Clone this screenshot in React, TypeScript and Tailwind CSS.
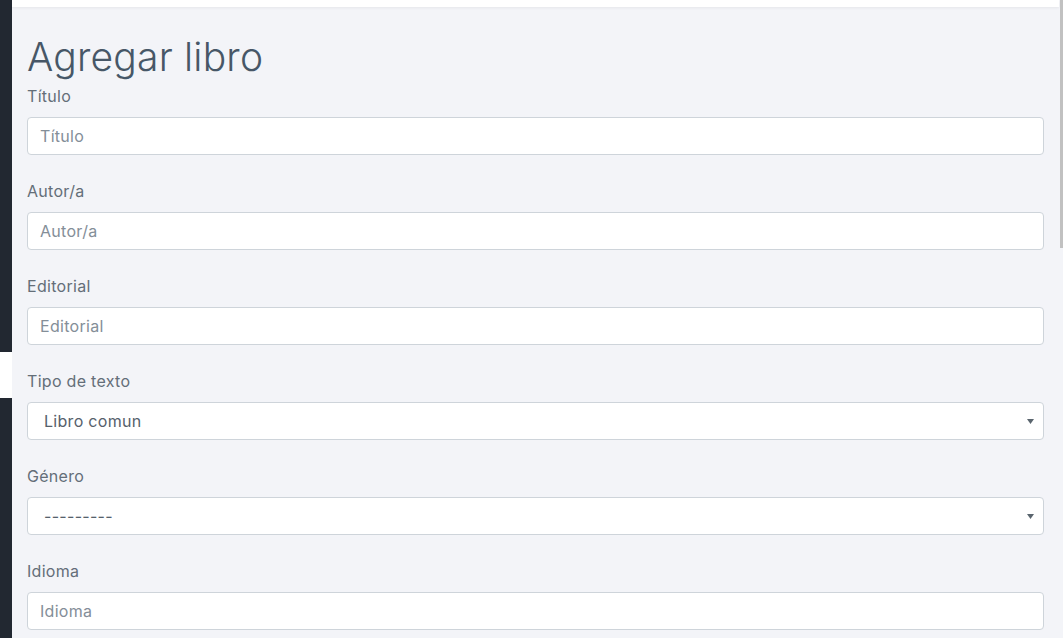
import React from "react";

const fields: { label: string; kind: "input" | "select"; value: string }[] = [
  { label: "Título", kind: "input", value: "Título" },
  { label: "Autor/a", kind: "input", value: "Autor/a" },
  { label: "Editorial", kind: "input", value: "Editorial" },
  { label: "Tipo de texto", kind: "select", value: "Libro comun" },
  { label: "Género", kind: "select", value: "---------" },
  { label: "Idioma", kind: "input", value: "Idioma" },
];

function Field({ label, kind, value }: { label: string; kind: "input" | "select"; value: string }) {
  return (
    <div className="mb-[24px]">
      <label className="block h-[24px] leading-[24px] mb-[9px] text-[16px] tracking-[0.3px] text-[#646e78]">{label}</label>
      {kind === "input" ? (
        <div className="h-[38px] rounded-[4px] border border-[#ced4da] bg-white px-[12px] pb-[1px] flex items-center text-[16px] tracking-[0.3px] text-[#848e98]">
          {value}
        </div>
      ) : (
        <div className="h-[38px] rounded-[4px] border border-[#ced4da] bg-white pl-[16px] pr-[8px] flex items-center justify-between text-[16px] tracking-[0.3px] text-[#56616b]">
          <span>{value}</span>
          <svg width="7" height="5" viewBox="0 0 7 5" className="mr-[1px]">
            <path d="M0 0h7L3.5 5z" fill="#5a656e" />
          </svg>
        </div>
      )}
    </div>
  );
}

export default function App() {
  return (
    <div
      className="flex h-[638px] overflow-hidden bg-[#f3f4f8]"
      style={{ fontFamily: "Inter, 'Open Sans', sans-serif" }}
    >
      {/* sidebar edge */}
      <div className="w-[12px] flex flex-col shrink-0">
        <div className="h-[352px] bg-[#222831]" />
        <div className="h-[46px] bg-white" />
        <div className="flex-1 bg-[#222831]" />
      </div>

      <div className="flex-1 flex flex-col min-w-0">
        <div className="h-[7px] bg-white shadow-[0_1px_3px_rgba(0,0,0,0.06)] shrink-0" />
        <div className="px-[15px]">
          <h1 className="mt-[26px] mb-[3px] text-[39px] leading-[48px] text-[#475767] font-light tracking-[0.2px]">Agregar libro</h1>
          {fields.map((f) => (
            <Field key={f.label} {...f} />
          ))}
        </div>
      </div>

      {/* scrollbar */}
      <div className="w-[4px] shrink-0 flex justify-end">
        <div className="w-[3px] h-[248px] bg-[#c1c1c1]" />
      </div>
    </div>
  );
}
